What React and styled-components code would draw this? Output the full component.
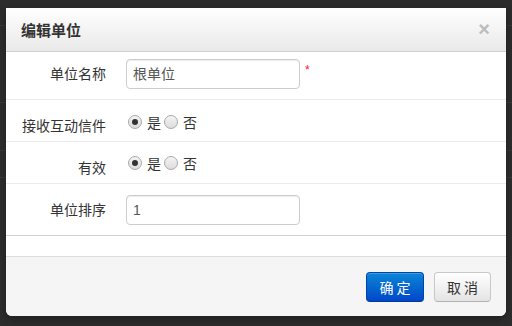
import React from "react";
import styled, { createGlobalStyle } from "styled-components";

const GlobalStyle = createGlobalStyle`
  html, body {
    margin: 0;
    padding: 0;
    width: 512px;
    height: 326px;
    overflow: hidden;
  }
  body {
    background-color: #2c2c2c;
    background-image:
      linear-gradient(#383838, #383838),
      linear-gradient(#383838, #383838),
      linear-gradient(#373737, #373737),
      linear-gradient(#383838, #383838);
    background-size: 100% 1px;
    background-position: 0 25px, 0 102px, 0 150px, 0 177px;
    background-repeat: no-repeat;
    font-family: "Noto Sans CJK SC", "Liberation Sans", sans-serif;
    color: #333;
  }
`;

const Backdrop = styled.div`
  padding: 8px 6px 0 6px;
`;

const Modal = styled.div`
  width: 500px;
  background: #fff;
  border-radius: 0 0 6px 6px;
  box-shadow: 0 3px 7px rgba(0, 0, 0, 0.3);
  overflow: hidden;
`;

const Header = styled.div`
  height: 43px;
  display: flex;
  align-items: center;
  justify-content: space-between;
  padding: 0 16px 0 15px;
  background: linear-gradient(#ffffff, #e9e9e9);
  border-bottom: 1px solid #cfcfcf;
`;

const Title = styled.h3`
  margin: 0;
  font-size: 15px;
  font-weight: bold;
  color: #333;
  line-height: 20px;
`;

const Close = styled.span`
  font-family: "Liberation Sans", sans-serif;
  font-size: 20px;
  font-weight: bold;
  color: #bcbcbc;
  line-height: 20px;
  margin-top: -2px;
`;

const Row = styled.div`
  box-sizing: border-box;
  height: ${(p) => p.$h}px;
  padding-top: ${(p) => p.$pt}px;
  display: flex;
  align-items: flex-start;
  border-bottom: 1px solid ${(p) => (p.$last ? "#d2d2d2" : "#ebebeb")};
`;

const Label = styled.label`
  width: 100px;
  text-align: right;
  font-size: 14px;
  line-height: 20px;
  padding-top: ${(p) => p.$pt}px;
  color: #333;
  flex-shrink: 0;
`;

const Control = styled.div`
  margin-left: 20px;
  display: flex;
  align-items: center;
`;

const Input = styled.div`
  box-sizing: border-box;
  width: 174px;
  height: 30px;
  padding: 0 6px;
  border: 1px solid #cccccc;
  border-radius: 4px;
  box-shadow: inset 0 1px 1px rgba(0, 0, 0, 0.075);
  font-size: 14px;
  line-height: 28px;
  color: #555;
  font-family: "Liberation Sans", "Noto Sans CJK SC", sans-serif;
`;

const Required = styled.span`
  color: #f0143c;
  font-size: 12px;
  margin-left: 5px;
  margin-top: -8px;
  font-family: "Liberation Sans", sans-serif;
`;

const RadioGroup = styled.div`
  display: flex;
  align-items: center;
  height: 20px;
  margin-left: 2px;
`;

const RadioBox = styled.span`
  box-sizing: border-box;
  width: 14px;
  height: 14px;
  border-radius: 50%;
  border: 1px solid #a9a9a9;
  background: linear-gradient(#f4f4f4, #dcdcdc);
  display: flex;
  align-items: center;
  justify-content: center;
  margin-left: ${(p) => (p.$first ? 0 : 3)}px;
  margin-right: 5px;

  &::after {
    content: "";
    width: 6px;
    height: 6px;
    border-radius: 50%;
    background: #333;
    display: ${(p) => (p.$checked ? "block" : "none")};
  }
`;

const RadioText = styled.span`
  font-size: 14px;
  line-height: 20px;
  color: #333;
`;

const Spacer = styled.div`
  height: 20px;
`;

const Footer = styled.div`
  height: 60px;
  box-sizing: border-box;
  padding: 0 15px;
  background: #f5f5f5;
  border-top: 1px solid #dddddd;
  display: flex;
  align-items: center;
  justify-content: flex-end;
  gap: 10px;
`;

const Button = styled.button`
  box-sizing: border-box;
  height: 30px;
  width: ${(p) => (p.$primary ? 58 : 57)}px;
  padding: 0;
  border-radius: 4px;
  font-family: "Noto Sans CJK SC", sans-serif;
  font-size: 14px;
  line-height: 28px;
  cursor: pointer;
  color: ${(p) => (p.$primary ? "#fff" : "#333")};
  border: 1px solid ${(p) => (p.$primary ? "#0044aa" : "#c8c8c8")};
  border-bottom-color: ${(p) => (p.$primary ? "#003899" : "#b3b3b3")};
  background: ${(p) =>
    p.$primary
      ? "linear-gradient(#0a86d6, #0047c8)"
      : "linear-gradient(#ffffff, #e4e4e4)"};
  box-shadow: inset 0 1px 0 rgba(255, 255, 255, 0.2);
`;

function Radios() {
  return (
    <RadioGroup>
      <RadioBox $first $checked />
      <RadioText>是</RadioText>
      <RadioBox />
      <RadioText>否</RadioText>
    </RadioGroup>
  );
}

export default function App() {
  return (
    <>
      <GlobalStyle />
      <Backdrop>
        <Modal>
          <Header>
            <Title>编辑单位</Title>
            <Close>×</Close>
          </Header>

          <Row $h={48} $pt={7}>
            <Label $pt={4}>单位名称</Label>
            <Control>
              <Input>根单位</Input>
              <Required>*</Required>
            </Control>
          </Row>

          <Row $h={42} $pt={12}>
            <Label $pt={3}>接收互动信件</Label>
            <Control>
              <Radios />
            </Control>
          </Row>

          <Row $h={42} $pt={11}>
            <Label $pt={4}>有效</Label>
            <Control>
              <Radios />
            </Control>
          </Row>

          <Row $h={52} $pt={11} $last>
            <Label $pt={4}>单位排序</Label>
            <Control>
              <Input>1</Input>
            </Control>
          </Row>

          <Spacer />

          <Footer>
            <Button $primary>确 定</Button>
            <Button>取 消</Button>
          </Footer>
        </Modal>
      </Backdrop>
    </>
  );
}
